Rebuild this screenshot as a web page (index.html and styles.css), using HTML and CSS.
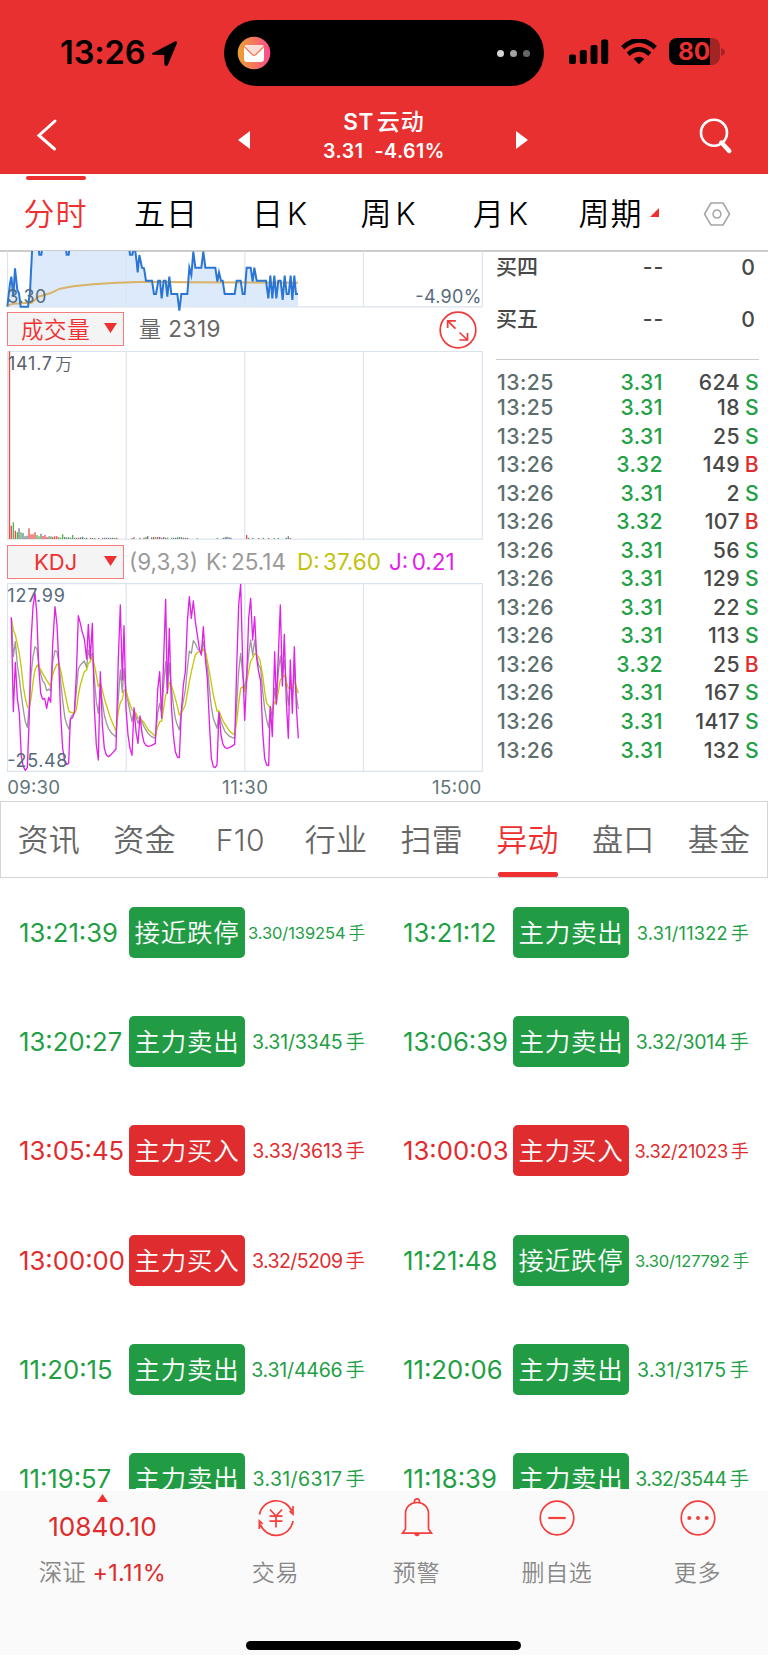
FILE: index.html
```html
<!DOCTYPE html>
<html lang="zh-CN">
<head>
<meta charset="utf-8">
<title>ST云动 3.31</title>
<link rel="stylesheet" href="styles.css">
</head>
<body>
<div class="screen">
  <header class="header">
    <div class="status">
      <span class="clock">13:26</span>
      <svg class="loc" width="27" height="27" viewBox="0 0 26 26"><path d="M2 12.2 23 1.5c1.4-.6 2.5.4 1.9 1.9L16.200 24c-.7 1.600-3.200 1.400-3.300-.6L12.700 14.500 2.800 14.200C.6 14 .4 12.900 2 12.200z"/></svg>
      <div class="island">
        <svg width="34" height="34" viewBox="0 0 34 34">
          <defs><linearGradient id="mail" x1="0" x2="1" y1="0" y2="0"><stop offset="0" stop-color="#eda12f"/><stop offset="1" stop-color="#fb4b8d"/></linearGradient></defs>
          <circle cx="17" cy="17" r="16.300" fill="url(#mail)"/>
          <rect x="7" y="9" width="20" height="17" rx="3" fill="#fff"/>
          <path d="M8 9.300h18.500L18 18.500q-1 .8-2 0z" fill="#fbdcd6"/>
          <path d="M7.300 10.500l8.200 8.200q1.500 1.300 3 0l8.200-8.200" fill="none" stroke="#f2734e" stroke-width="1.200"/>
        </svg>
        <span class="dots"><i></i><i></i><i></i></span>
      </div>
      <svg class="signal" width="40" height="26" viewBox="0 0 40 26"><rect x="0" y="15.500" width="7" height="9.500" rx="2"/><rect x="10.800" y="11" width="7" height="14" rx="2"/><rect x="21.500" y="6" width="7" height="19" rx="2"/><rect x="32.200" y="0.500" width="7" height="24.500" rx="2"/></svg>
      <svg class="wifi" width="36" height="26" viewBox="0 0 36 26"><path d="M1.800 8.800Q18-6.200 34.200 8.800" fill="none" stroke="#000" stroke-width="4.800"/><path d="M7.200 15.200q10.800-9.600 21.600 0" fill="none" stroke="#000" stroke-width="4.600"/><path d="M12.700 19.900q5.300-4.300 10.600 0L18 25.300z"/></svg>
      <div class="battery"><b>80</b></div>
      <svg class="nub" width="4" height="8" viewBox="0 0 4 8"><path d="M0 0q4 1.500 4 4t-4 4z" fill="#a32424"/></svg>
    </div>
    <div class="nav">
      <svg class="back" width="22" height="34" viewBox="0 0 22 34"><path d="M19 3 3 17.500 18.500 31" fill="none" stroke="#fff" stroke-width="3" stroke-linecap="round" stroke-linejoin="miter"/></svg>
      <svg class="prev" width="12" height="18" viewBox="0 0 12 18"><path d="M12 0v18L0 9z" fill="#fff"/></svg>
      <div class="title"><div class="name">ST<span>云动</span></div><div class="quote"><span>3.31</span><span>-4.61%</span></div></div>
      <svg class="next" width="12" height="18" viewBox="0 0 12 18"><path d="M0 0v18l12-9z" fill="#fff"/></svg>
      <svg class="search" width="34" height="36" viewBox="0 0 34 36"><circle cx="15" cy="14.700" r="13" fill="none" stroke="#fff" stroke-width="2.600"/><path d="M22.500 24.500l7.700 8.500" stroke="#fff" stroke-width="4.400" stroke-linecap="round"/></svg>
    </div>
  </header>

  <nav class="periods">
    <span class="on">分时</span><span class="five">五日</span><span>日<em>K</em></span><span>周<em>K</em></span><span>月<em>K</em></span><span class="more">周期</span>
    <svg width="28" height="26" viewBox="0 0 28 26"><path d="M8 2h12l6.500 11L20 24H8L1.500 13z M14 9a4 4 0 1 0 .01 0z" fill="none" stroke="#a5a5a5" stroke-width="1.500" stroke-linejoin="round"/></svg>
  </nav>

  <main class="market">
    <section class="charts">
      <svg class="plot price" width="490" height="58" viewBox="0 18 1470 174">
        <defs><clipPath id="pc"><rect x="0" y="18" width="1470" height="200"/></clipPath></defs>
        <g clip-path="url(#pc)">
          <path fill="#dceafb" d="M22 185L30 115 34 95 40 155 45 70 52 135 57 145 62 185 84 185 90 140 96 22 97 5 406 5 410 50 413 82 418 30 426 68 432 70 438 107 456 107 462 147 468 147 475 107 480 107 485 160 491 107 497 107 502 155 508 95 514 147 532 147 538 185 544 147 562 147 568 68 574 90 580 20 586 68 604 68 610 20 616 68 646 68 652 110 657 82 663 107 668 107 674 147 704 147 710 107 722 107 728 147 734 147 740 68 752 68 758 110 763 68 770 107 798 107 805 160 811 92 817 160 823 92 829 160 835 107 842 107 848 165 854 92 860 147 866 147 872 92 877 165 883 92 888 147 894 147V185z"/>
          <path class="grid" d="M22.500 0V185M1447 0V185M378.500 0V185M734.500 0V185M1090.500 0V185M22 185.500H1447"/>
          <path d="M22 182 40 176 95 173 115 155 150 145 180 131 220 124 280 118 350 113 440 110 560 112 894 113" fill="none" stroke="#d9b267" stroke-width="6"/>
          <path class="trend" d="M22 185L30 115 34 95 40 155 45 70 52 135 57 145 62 185 84 185 90 140 96 22 97 5 115 5 118 29 124 29 127 5 197 5 200 29 206 29 209 5 387 5 390 29 397 29 402 5 406 20 410 50 413 82 418 30 426 68 432 70 438 107 456 107 462 147 468 147 475 107 480 107 485 160 491 107 497 107 502 155 508 95 514 147 532 147 538 197 544 147 562 147 568 68 574 90 580 20 586 68 604 68 610 20 616 68 646 68 652 110 657 82 663 107 668 107 674 147 704 147 710 107 722 107 728 147 734 147 740 68 752 68 758 110 763 68 770 107 798 107 805 160 811 92 817 160 823 92 829 160 835 107 842 107 848 165 854 92 860 147 866 147 872 92 877 165 883 92 888 147 894 147"/>
        </g>
        <text x="22" y="174" textLength="117" class="lab">3.30</text>
        <text x="1246" y="174" textLength="198" class="lab">-4.90%</text>
      </svg>

      <div class="bar">
        <div class="pick"><span class="cjk">成交量</span><i></i></div>
        <span class="vol"><span>量</span> 2319</span>
        <svg class="expand" width="38" height="38" viewBox="0 0 38 38" fill="none" stroke="#f03a3a" stroke-width="1.700"><circle cx="19" cy="19" r="17.800"/><path d="M16.500 17.700 8.700 9.900M8.700 17V9.900h8.200M20.500 21.500l8 7.500M28.500 22v7h-8.200"/></svg>
      </div>

      <svg class="plot" width="490" height="193" viewBox="0 12 1470 579">
        <path class="grid" d="M22.500 19.500H1447V582.500H22.500zM378.500 19V582M734.500 19V582M1090.500 19V582"/>
        <g fill="none" stroke-width="4">
          <path stroke="#e8504f" d="M28.500 582V19M34 582v-40M46 582v-25M87 582v-32M93 582v-14M99 582v-14M105 582v-20M129 582v-9M135 582v-12M141 582v-6M158 582v-6M164 582v-8M170 582v-8M236 582v-4M272 582v-4M296 582v-3M350 582v-4M402 582v-5M432 582v-4M461 582v-6M473 582v-6M491 582v-6M551 582v-4M740 582v-12M776 582v-3M806 582v-3M871 582v-3"/>
          <path stroke="#53b548" d="M40 582v-50M52 582v-20M63 582v-20M111 582v-12M117 582v-8M153 582v-8M176 582v-6M182 582v-4M188 582v-14M200 582v-5M212 582v-4M218 582v-12M254 582v-3M284 582v-3M344 582v-3M396 582v-3M438 582v-6M467 582v-5M503 582v-4M515 582v-4M539 582v-6M652 582v-3M790 582v-4M823 582v-3"/>
          <path stroke="#6e8090" d="M57 582v-32M69 582v-18M75 582v-8M81 582v-10M123 582v-16M147 582v-8M194 582v-6M206 582v-5M224 582v-4M230 582v-4M242 582v-5M248 582v-7M260 582v-4M278 582v-3M308 582v-3M314 582v-4M320 582v-4M326 582v-3M332 582v-4M338 582v-4M420 582v-4M443 582v-9M455 582v-5M479 582v-6M485 582v-4M497 582v-4M521 582v-4M527 582v-4M533 582v-5M545 582v-5M557 582v-4M563 582v-3M592 582v-2M670 582v-4M676 582v-5M681 582v-7M687 582v-5M693 582v-4M746 582v-4M758 582v-3M835 582v-3M859 582v-4M865 582v-8"/>
        </g>
        <text x="24" y="75" class="lab dark" textLength="132">141.7</text><text x="166" y="75" class="lab dark wan">万</text>
      </svg>

      <div class="bar second">
        <div class="pick kdj"><span>KDJ</span><i></i></div>
        <span class="p k0">(9,3,3)</span><span class="p kk">K: 25.14</span><span class="p dd">D: 37.60</span><span class="p jj">J: 0.21</span>
      </div>

      <svg class="plot" width="490" height="220" viewBox="0 18 1470 660">
        <path class="grid" d="M22.500 26H1447V589H22.500zM378.500 26V589M734.500 26V589M1090.500 26V589"/>
        <path class="kl" stroke="#9b9b9b" d="M34 130 40 245 46 200 52 270 58 310 64 360 70 405 76 440 82 457 88 390 93 300 99 245 105 215 111 222 117 275 123 300 128 318 134 325 140 347 146 342 152 348 158 260 165 227 171 230 177 265 183 330 189 385 195 430 201 450 207 463 213 425 223 415 229 350 235 282 241 270 253 258 260 278 265 225 271 250 277 235 283 310 289 380 295 415 301 340 307 380 313 420 319 443 325 460 335 475 348 486 355 370 361 285 367 352 372 280 378 350 390 410 396 440 402 405 408 425 414 445 420 428 432 455 444 475 455 485 466 490 473 415 479 385 485 415 491 330 497 260 502 345 508 265 514 340 520 390 526 430 532 450 538 465 544 410 556 345 562 280 568 228 574 235 580 197 586 205 592 220 604 235 610 200 616 240 622 275 628 340 634 395 640 430 651 460 657 412 663 440 675 470 690 485 704 490 710 390 716 290 722 235 728 300 734 345 740 300 746 240 752 195 758 240 764 195 770 245 776 270 782 280 788 350 794 400 800 435 806 458 811 400 817 425 824 340 829 380 835 290 841 243 847 310 853 255 859 330 865 390 871 320 877 365 883 285 889 360 895 402"/>
        <path class="kl" stroke="#c6c60a" d="M34 130 40 165 46 180 58 235 64 280 70 335 76 370 82 395 88 400 94 365 100 315 105 285 112 270 120 280 135 308 152 335 158 300 165 280 171 268 177 265 183 290 190 330 200 380 207 410 223 415 229 405 235 360 241 330 253 290 260 285 265 265 271 260 277 243 283 270 289 300 295 335 301 325 307 345 313 370 319 390 330 425 340 450 348 467 355 410 361 383 367 373 372 345 378 345 384 370 396 405 402 408 408 415 414 430 420 430 430 440 445 465 466 483 473 455 479 440 485 438 491 400 497 360 502 350 508 322 514 330 520 350 530 385 538 420 544 415 556 390 562 355 568 320 574 290 580 265 586 240 592 232 604 230 610 222 618 235 628 290 640 360 651 408 657 408 670 440 690 470 704 480 710 440 716 385 722 340 728 335 734 350 740 320 746 290 752 258 758 250 764 235 770 238 780 255 788 300 794 350 800 385 806 392 811 400 817 405 824 380 829 385 835 350 841 315 853 300 859 320 865 340 871 335 877 340 883 320 889 335 895 355"/>
        <path class="kl" stroke="#e022e8" d="M34 127 40 410 46 262 52 370 58 415 64 545 70 575 76 586 82 578 88 420 93 200 99 95 105 55 110 110 116 270 122 355 128 373 134 370 140 400 146 367 152 382 158 210 165 95 171 150 176 255 182 420 188 520 194 557 200 568 206 565 211 432 218 428 223 412 229 300 235 122 241 145 247 172 253 192 260 252 265 148 271 252 277 145 283 400 289 510 295 555 301 290 307 450 313 520 319 540 325 545 331 541 348 522 355 250 361 90 367 315 372 152 378 400 384 480 390 520 396 541 402 398 408 470 414 505 420 423 426 475 432 502 438 511 444 514 454 512 466 505 473 345 479 290 485 430 491 250 497 73 502 355 508 160 514 390 520 480 526 530 532 546 538 548 544 410 550 330 556 290 562 140 568 65 574 130 580 78 586 140 592 180 598 220 604 240 610 155 616 250 622 310 628 440 634 550 640 575 645 578 651 570 657 412 663 480 669 508 675 518 681 520 690 517 704 508 710 280 716 90 722 28 728 260 734 436 740 310 746 130 752 70 758 195 764 125 770 250 776 290 782 320 788 470 794 550 800 570 806 572 811 395 817 485 824 230 829 388 835 240 841 90 847 333 853 178 859 380 865 490 871 255 877 415 883 215 889 395 895 490"/>
        <text x="22" y="80" textLength="173" class="lab">127.99</text>
        <text x="22" y="577" textLength="180" class="lab">-25.48</text>
        <text x="22" y="656" textLength="158" class="lab time">09:30</text>
        <text x="666" y="656" textLength="138" class="lab time">11:30</text>
        <text x="1296" y="656" textLength="148" class="lab time">15:00</text>
      </svg>
    </section>

    <aside class="book">
      <div class="bid"><b>买四</b><span>--</span><span>0</span></div>
      <div class="bid"><b>买五</b><span>--</span><span>0</span></div>
      <div class="ticks">
        <div class="first"><time>13:25</time><span>3.31</span><b>624</b><i>S</i></div>
        <div><time>13:25</time><span>3.31</span><b>18</b><i>S</i></div>
        <div><time>13:25</time><span>3.31</span><b>25</b><i>S</i></div>
        <div><time>13:26</time><span>3.32</span><b>149</b><i class="buy">B</i></div>
        <div><time>13:26</time><span>3.31</span><b>2</b><i>S</i></div>
        <div><time>13:26</time><span>3.32</span><b>107</b><i class="buy">B</i></div>
        <div><time>13:26</time><span>3.31</span><b>56</b><i>S</i></div>
        <div><time>13:26</time><span>3.31</span><b>129</b><i>S</i></div>
        <div><time>13:26</time><span>3.31</span><b>22</b><i>S</i></div>
        <div><time>13:26</time><span>3.31</span><b>113</b><i>S</i></div>
        <div><time>13:26</time><span>3.32</span><b>25</b><i class="buy">B</i></div>
        <div><time>13:26</time><span>3.31</span><b>167</b><i>S</i></div>
        <div><time>13:26</time><span>3.31</span><b>1417</b><i>S</i></div>
        <div><time>13:26</time><span>3.31</span><b>132</b><i>S</i></div>
      </div>
    </aside>
  </main>

  <nav class="sections">
    <span>资讯</span><span>资金</span><span class="latin">F10</span><span>行业</span><span>扫雷</span><span class="on">异动</span><span>盘口</span><span>基金</span>
  </nav>

  <section class="moves">
    <div class="move"><time>13:21:39</time><b>接近跌停</b><span class="s6">3.30/139254<em>手</em></span></div>
    <div class="move"><time>13:21:12</time><b>主力卖出</b><span class="s5 loose">3.31/11322<em>手</em></span></div>
    <div class="move"><time>13:20:27</time><b>主力卖出</b><span class="snug">3.31/3345<em>手</em></span></div>
    <div class="move"><time>13:06:39</time><b>主力卖出</b><span class="snug">3.32/3014<em>手</em></span></div>
    <div class="move up"><time>13:05:45</time><b>主力买入</b><span class="snug">3.33/3613<em>手</em></span></div>
    <div class="move up"><time>13:00:03</time><b>主力买入</b><span class="s5 tight">3.32/21023<em>手</em></span></div>
    <div class="move up"><time>13:00:00</time><b>主力买入</b><span class="tight">3.32/5209<em>手</em></span></div>
    <div class="move"><time>11:21:48</time><b>接近跌停</b><span class="s6 snug">3.30/127792<em>手</em></span></div>
    <div class="move"><time>11:20:15</time><b>主力卖出</b><span class="snug">3.31/4466<em>手</em></span></div>
    <div class="move"><time>11:20:06</time><b>主力卖出</b><span class="loose">3.31/3175<em>手</em></span></div>
    <div class="move"><time>11:19:57</time><b>主力卖出</b><span class="loose">3.31/6317<em>手</em></span></div>
    <div class="move"><time>11:18:39</time><b>主力卖出</b><span class="tight">3.32/3544<em>手</em></span></div>
  </section>

  <footer class="dock">
    <div class="index"><i></i><strong>10840.10</strong><p>深证 <span>+1.11%</span></p></div>
    <div class="act"><svg width="40" height="40" viewBox="0 0 40 40" fill="none" stroke="#f43f3c" stroke-width="1.700"><path d="M3.500 16.500A17 17 0 0 1 36 13.500M37 23A17 17 0 0 1 4 25.500M37 8v8.200l-3.500-3M3.300 31v-8.200l3.500 3M14 11.500l6 6.500 6-6.500M20 18v11.500M13.500 18.200h13M13.500 23.200h13"/></svg><span>交易</span></div>
    <div class="act"><svg width="40" height="40" viewBox="0 0 40 40" fill="none" stroke="#f43f3c" stroke-width="1.700"><path d="M8.500 31V15.500C8.500 9 13.500 4.500 20 4.500S31.500 9 31.500 15.500V31l3 4.200H5.500zM17.500 4.500a2.600 2.900 0 1 1 5 0"/><path d="M17.200 35.500h5.600q-.3 2.800-2.800 2.800t-2.800-2.800z" fill="#f43f3c" stroke="none"/></svg><span>预警</span></div>
    <div class="act"><svg width="40" height="40" viewBox="0 0 40 40" fill="none" stroke="#f43f3c" stroke-width="1.700"><circle cx="20" cy="20" r="16.800"/><path d="M11.300 20h17.400" stroke-width="2.200"/></svg><span>删自选</span></div>
    <div class="act"><svg width="40" height="40" viewBox="0 0 40 40" fill="none" stroke="#f43f3c" stroke-width="1.700"><circle cx="20" cy="20" r="16.800"/><g fill="#f43f3c" stroke="none"><circle cx="11.300" cy="20" r="2"/><circle cx="20" cy="20" r="2"/><circle cx="28.700" cy="20" r="2"/></g></svg><span>更多</span></div>
    <div class="home"></div>
  </footer>
</div>
</body>
</html>
```

FILE: styles.css
```css
* { box-sizing: border-box; }
body { margin: 0; background: #fff; font-family: Inter, "Noto Sans CJK SC", sans-serif; }
em, i { font-style: normal; }
svg { display: block; flex: none; }
.screen { width: 768px; height: 1665px; overflow: hidden; display: flex; flex-direction: column; }

.header { height: 174px; background: #e83030; flex: none; }
.status { height: 86px; padding: 20px 0 0 61px; display: flex; align-items: flex-start; }
.clock { width: 90px; font-size: 32.500px; font-weight: 600; line-height: 40px; padding-top: 13px; letter-spacing: -.1px; white-space: nowrap; margin-left: -1px; margin-right: 1px; }
.loc { margin-top: 20px; }
.island { width: 320px; height: 66px; margin-left: 46px; border-radius: 33px; background: #000; display: flex; align-items: center; justify-content: space-between; padding: 0 14px 0 13px; }
.dots { display: flex; gap: 6px; }
.dots i { width: 7px; height: 7px; border-radius: 50%; background: #d5d5d5; }
.dots i:nth-child(2) { background: #a3a3a3; }
.dots i:nth-child(3) { background: #666; }
.signal { margin: 19px 0 0 25px; }
.wifi { margin: 19px 0 0 12px; }
.battery { width: 51px; height: 27px; margin: 18px 0 0 12px; border-radius: 8px; background: linear-gradient(90deg, #000 41px, #a32424 41px); color: #e83030; }
.battery b { display: block; width: 50px; text-align: center; font-size: 24.500px; line-height: 27px; font-weight: 700; letter-spacing: -.3px; }
.nub { margin: 28px 0 0 1px; }
.nav { height: 88px; display: flex; align-items: flex-start; color: #fff; }
.back { margin: 32px 0 0 36px; }
.prev { margin: 45px 0 0 180px; }
.next { margin: 45px 0 0 1px; }
.title { width: 265px; text-align: center; padding-top: 21px; }
.name { font-size: 22.500px; font-weight: 600; line-height: 30px; letter-spacing: .5px; padding-left: 3px; }
.name span { font-size: 23px; font-weight: 500; margin-left: 3px; letter-spacing: 1px; }
.quote { display: flex; justify-content: center; gap: 11px; font-size: 19.500px; line-height: 26px; font-weight: 600; letter-spacing: .5px; padding: 1px 0 0 3px; }
.search { margin: 32px 0 0 171px; }

.periods { height: 78px; border-bottom: 2px solid #ccc; display: grid; grid-template-columns: 111px 106px 126px 91px 134px 85px 115px; align-items: center; text-align: center; font-size: 31px; font-weight: 350; line-height: 40px; color: #000; flex: none; white-space: nowrap; letter-spacing: 1px; }
.periods span { position: relative; padding-top: 4px; }
.periods .five { padding-left: 4px; }
.periods em { margin-left: 3px; }
.periods .on { color: #ee3030; }
.periods .on::before { content: ""; position: absolute; left: 26px; top: -14px; width: 60px; height: 4px; border-radius: 2px; background: #ee3030; }
.periods .more::after { content: ""; position: absolute; left: 82px; top: 18px; width: 9px; height: 9px; background: #f03030; clip-path: polygon(100% 0, 100% 100%, 0 100%); }
.periods svg { margin: 3px 0 0 50px; }

.market { height: 549px; margin-top: -1px; display: flex; flex: none; }
.charts { width: 490px; }
.plot { overflow: visible; }
.grid { fill: none; stroke: #dbe4ed; stroke-width: 3.500; }
.trend { fill: none; stroke: #2b75d4; stroke-width: 6; stroke-linejoin: miter; stroke-miterlimit: 6; }
.kl { fill: none; stroke-width: 4; stroke-linejoin: round; }
.lab { font-size: 54px; fill: #566a7c; }
.dark { fill: #58606a; }
.wan { font-size: 51px; font-weight: 350; }
.time { fill: #5f7577; font-size: 56px; }
.bar { height: 40px; padding: 3px 0 0 7px; display: flex; font-size: 22.500px; color: #666; white-space: nowrap; }
.pick { width: 117px; height: 34px; border: 1px solid #f47c7c; background: #f4f4f4; color: #f03030; display: flex; align-items: center; padding-left: 13px; font-size: 22.500px; position: relative; }
.pick i { position: absolute; right: 6px; top: 10px; width: 13px; height: 10px; background: #ee3030; clip-path: polygon(0 0, 100% 0, 50% 100%); }
.pick .cjk { letter-spacing: .6px; font-weight: 350; position: relative; top: -1px; }
.vol { margin-left: 15px; line-height: 34px; letter-spacing: .5px; }
.vol span { font-weight: 350; font-size: 22px; }
.expand { margin: -1px 13px 0 auto; }
.second { height: 39px; }
.pick.kdj { padding-left: 26px; font-size: 22px; }
.p { line-height: 34px; font-size: 22.500px; color: #999; word-spacing: -3px; }
.k0 { margin-left: 5px; width: 77px; }
.kk { width: 91px; }
.dd { width: 92px; color: #c2c20a; }
.jj { color: #e022e8; }

.book { width: 278px; padding-left: 6px; font-size: 21.200px; font-weight: 550; color: #484848; }
.bid { height: 52px; line-height: 28px; padding: 2px 13px 0 0; display: grid; grid-template-columns: 94px 74px 1fr; text-align: right; }
.bid b { font-weight: 500; font-size: 21px; text-align: left; }
.bid span:nth-child(2) { letter-spacing: .8px; }
.ticks { width: 263px; border-top: 1px solid #ccc; margin-top: 4px; padding-top: 10px; }
.ticks div { height: 28.560px; line-height: 28.500px; display: grid; grid-template-columns: 86px 81px 77px 19px; text-align: right; letter-spacing: .4px; }
.ticks .first { height: 23px; line-height: 24px; }
.ticks time { text-align: left; color: #5c6e6e; padding-left: 1px; }
.ticks span, .ticks i { color: #22a045; }
.ticks b { font-weight: 550; }
.ticks .buy { color: #e22c2c; }

.sections { height: 77px; border: 1px solid #d5d5d5; margin-top: 1px; display: flex; flex: none; font-size: 31px; font-weight: 350; color: #666; text-align: center; line-height: 76px; white-space: nowrap; letter-spacing: .5px; }
.sections span { width: 95.800px; position: relative; }
.sections .latin { font-size: 30px; }
.sections .on { color: #ee3030; }
.sections .on::after { content: ""; position: absolute; left: 18px; bottom: 0; width: 60px; height: 5px; border-radius: 2px; background: #ee3030; }

.moves { height: 611px; padding-top: 1px; margin-bottom: 2px; overflow: hidden; display: grid; grid-template-columns: 384px 384px; grid-auto-rows: 109.200px; flex: none; }
.move { padding: 28px 19px 0 18px; height: 109.200px; display: grid; grid-template-columns: 111px 116px 1fr; line-height: 52px; color: #229f44; white-space: nowrap; }
.move time { font-size: 25.700px; padding-left: 1px; }
.move b { height: 51px; border-radius: 5px; background: #229c44; color: #fff; font-size: 25.500px; font-weight: 350; text-align: center; letter-spacing: .8px; }
.move span { font-size: 19.500px; text-align: right; }
.move em { margin-left: 3px; letter-spacing: 0; font-weight: 350; }
.move .s5 { font-size: 18.200px; }
.move .s6 { font-size: 16.500px; letter-spacing: -.1px; }
.move .snug { letter-spacing: -.2px; }
.move .tight { letter-spacing: -.6px; }
.move .s5.tight { letter-spacing: -.35px; }
.move .loose { letter-spacing: .35px; }
.move .s5.loose { letter-spacing: .2px; }
.up { color: #df2c2f; }
.up b { background: #df2c2f; }

.dock { height: 164px; background: #fafafa; position: relative; display: grid; grid-template-columns: 205px 141px 141px 140px 141px; align-content: start; flex: none; color: #888; }
.index { padding-top: 3px; text-align: center; color: #de2b2b; }
.index i { display: block; width: 11px; height: 8px; margin: 0 0 0 97px; background: #ee3030; clip-path: polygon(50% 0, 100% 100%, 0 100%); }
.index strong { display: block; font-size: 26.200px; font-weight: 400; line-height: 32px; margin-top: 9px; }
.index p { margin: 13px 0 0; font-size: 23.500px; font-weight: 350; line-height: 34px; color: #888; }
.index span { color: #de2b2b; font-weight: 400; letter-spacing: .3px; }
.act { display: flex; flex-direction: column; align-items: center; padding-top: 7px; }
.act span { margin-top: 18px; font-size: 23px; font-weight: 350; line-height: 34px; letter-spacing: .7px; }
.home { position: absolute; left: 246px; top: 150px; width: 275px; height: 9px; border-radius: 5px; background: #000; }
```
